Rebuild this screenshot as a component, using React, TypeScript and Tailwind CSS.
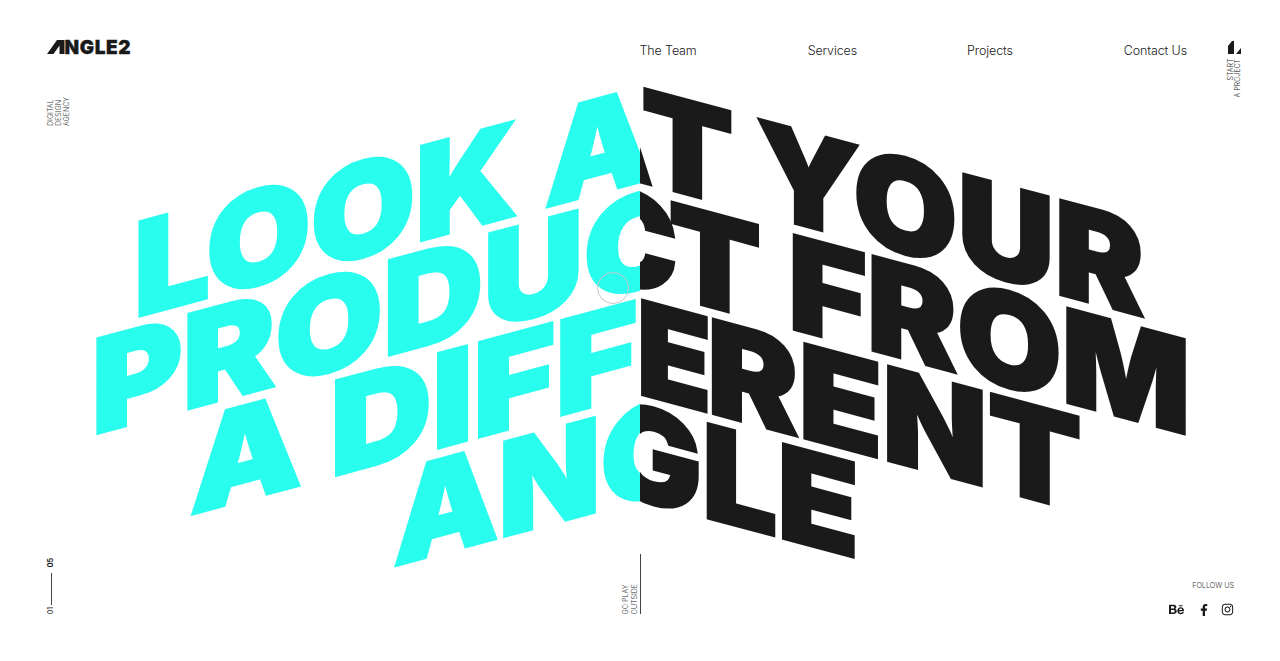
import type { ReactNode } from "react";
import { FaBehance, FaFacebookF, FaInstagram } from "react-icons/fa";

const LEFT: { text: ReactNode; cls: string }[] = [
  { text: "LOOK AT YOUR", cls: "translate-x-[1px] scale-x-[1.037]" },
  { text: "PRODUCT FROM", cls: "translate-x-[18px] scale-x-[1.068]" },
  { text: "A DIFFERENT", cls: "translate-x-[10px] scale-x-[1.085]" },
  { text: "ANGLE", cls: "translate-x-[-15px] scale-x-[1.02]" },
];

const RIGHT: { text: ReactNode; cls: string }[] = [
  { text: "LOOK AT YOUR", cls: "translate-x-[3px] scale-x-[1.033] [word-spacing:-4px]" },
  {
    text: (
      <>
        PRODU<span className="inline-block translate-x-[9px]">C</span>T FROM
      </>
    ),
    cls: "translate-x-[0px] scale-x-[1.038]",
  },
  {
    text: (
      <>
        A DIFF<span className="inline-block origin-right translate-x-[4px] scale-x-[0.89]">E</span>RENT
      </>
    ),
    cls: "translate-x-[-5px] scale-x-[1.053]",
  },
  { text: "ANGLE", cls: "translate-x-[-14px] scale-x-[1.025]" },
];

function Hero({ lines }: { lines: { text: ReactNode; cls: string }[] }) {
  return (
    <>
      {lines.map((l, i) => (
        <div
          key={i}
          className={`h-[106px] whitespace-nowrap text-center text-[130px] leading-[106px] font-black [-webkit-text-stroke:3px_currentColor] ${l.cls}`}
        >
          {l.text}
        </div>
      ))}
    </>
  );
}

function Rot({ children, className = "" }: { children: ReactNode; className?: string }) {
  return (
    <div className={`rotate-180 uppercase [writing-mode:vertical-rl] ${className}`}>{children}</div>
  );
}

export default function App() {
  return (
    <div className="relative h-[661px] w-[1280px] overflow-hidden bg-white text-[#1a1a1a] [font-family:Inter,sans-serif]">
      <div className="grid h-full grid-cols-2">
        <div className="h-[900px] w-[640px] origin-[100%_0] skew-y-[-15deg] overflow-hidden pt-[81.5px] text-[#29fdee]">
          <div className="w-[1280px]"><Hero lines={LEFT} /></div>
        </div>
        <div className="h-[900px] w-[640px] origin-[0_0] skew-y-[15deg] overflow-hidden pt-[81.5px] text-[#1a1a1a]">
          <div className="ml-[-640px] w-[1280px]"><Hero lines={RIGHT} /></div>
        </div>
      </div>

      <header className="absolute left-[47px] right-[39px] top-[40px] flex items-start justify-between">
        <div className="flex h-[14px] items-center">
          <svg width="18" height="14" viewBox="0 0 18 14" aria-label="A" className="mr-[-0.5px]">
            <path d="M0 14 10 0h7.5v14h-5V5.5L6.5 14z" fill="#1a1a1a" />
          </svg>
          <span className="text-[19px] font-black leading-none tracking-[0.6px] [-webkit-text-stroke:0.3px_currentColor]">NGLE2</span>
        </div>
        <nav className="ml-auto mr-[40px] mt-[2px] flex text-[12.5px] font-light tracking-[-0.01em]">
          <span className="mr-[111px]">The Team</span>
          <span className="mr-[110px]">Services</span>
          <span className="mr-[111px]">Projects</span>
          <span>Contact Us</span>
        </nav>
        <div className="flex flex-col items-center">
          <svg width="13" height="13" viewBox="0 0 13 13" className="mt-[1px]">
            <path d="M0 13V5l4-5h2v13zM8 13l5-6v6z" fill="#1a1a1a" />
          </svg>
          <Rot className="mt-[5px] text-right text-[7px] font-light leading-[7px]">Start<br />A Project</Rot>
        </div>
      </header>

      <Rot className="absolute left-[47px] top-[97px] text-[7px] font-light leading-[8px] text-[#333]">Digital<br />Design<br />Agency</Rot>

      <div className="absolute bottom-[47px] left-[46px] flex flex-col items-center gap-[2px] text-[7px]">
        <Rot className="mb-[4px] font-bold">05</Rot>
        <div className="h-[32px] w-px bg-[#444]" />
        <Rot>01</Rot>
      </div>

      <div className="absolute bottom-[47px] left-[621px] flex items-end gap-px">
        <Rot className="text-[7px] font-light leading-[9px] text-[#333]">Go Play<br />Outside</Rot>
        <div className="h-[60px] w-px bg-[#444]" />
      </div>

      <div className="absolute bottom-[44px] right-[46px] flex flex-col items-end gap-[10px]">
        <span className="text-[7.2px] font-light uppercase text-[#333]">Follow Us</span>
        <div className="flex items-center gap-[14px]">
          <FaBehance className="text-[15px]" /><FaFacebookF className="mr-[-3px] text-[12px]" /><FaInstagram className="text-[13px]" />
        </div>
      </div>

      <div className="absolute left-[597px] top-[272px] h-[32px] w-[32px] rounded-full border border-[#c8c8c8]" />
    </div>
  );
}
